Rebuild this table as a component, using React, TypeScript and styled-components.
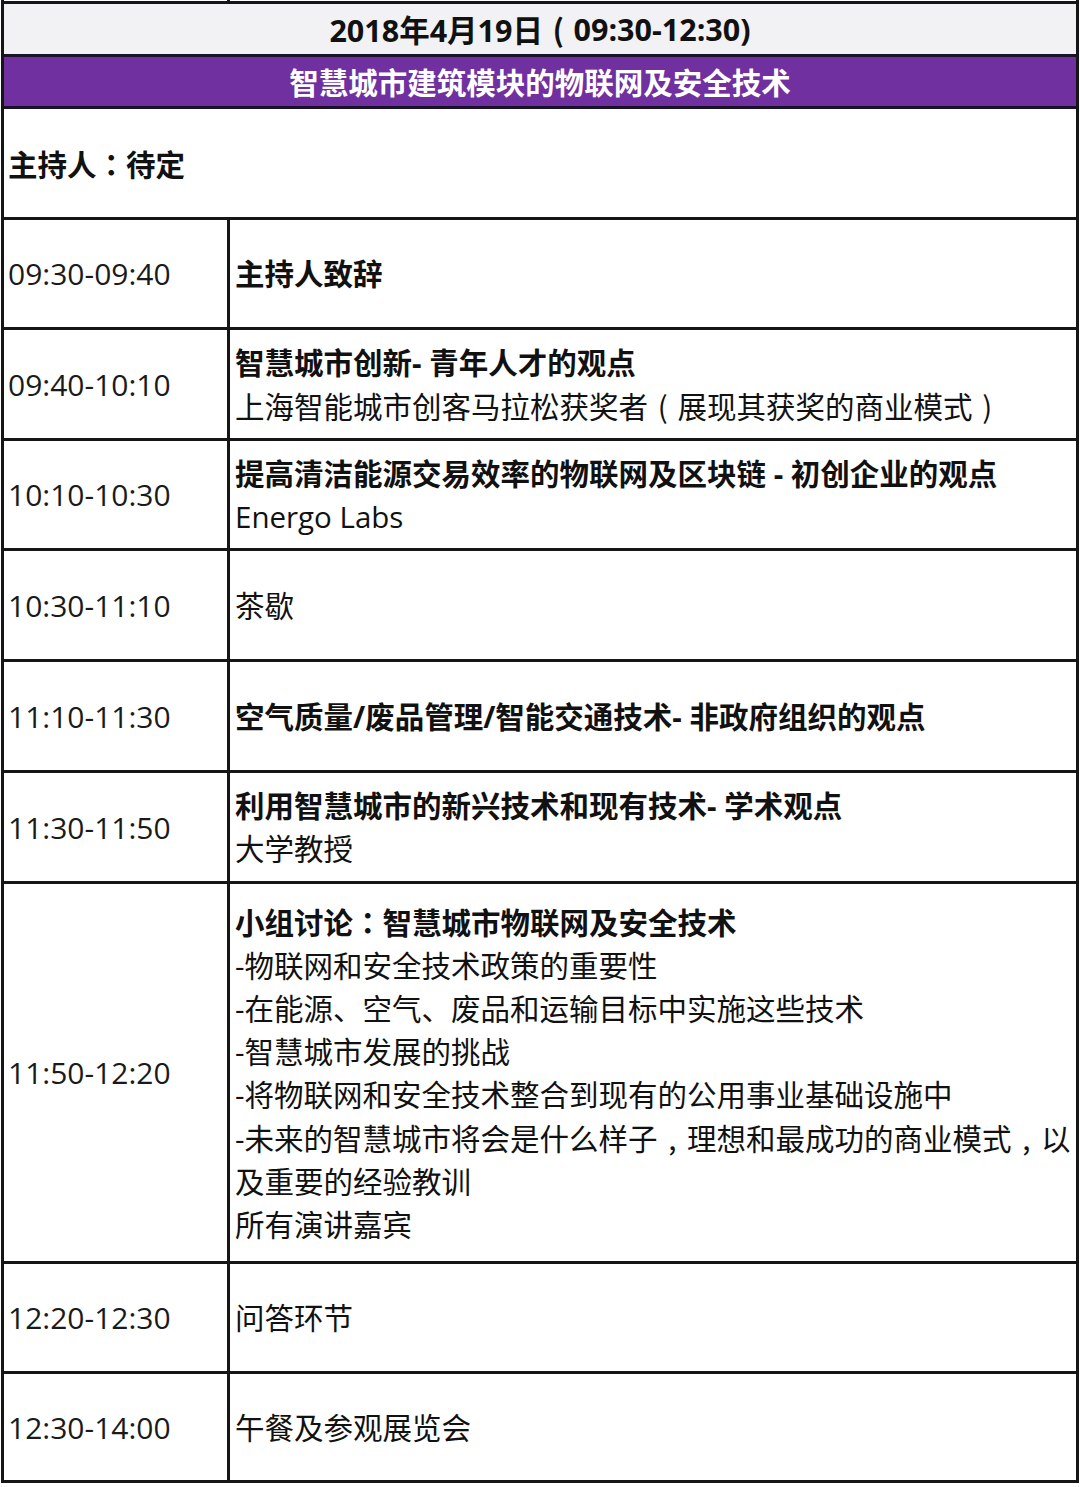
import React from 'react';
import styled, { createGlobalStyle } from 'styled-components';

const GlobalStyle = createGlobalStyle`
  html,
  body {
    margin: 0;
    padding: 0;
    background: #ffffff;
  }

  body {
    font-family: 'Open Sans', 'Noto Sans CJK SC', sans-serif;
    color: #111111;
  }
`;

const LINE = '3px solid #161616';

const Sheet = styled.div`
  width: 1078px;
  margin-left: 1px;
  box-sizing: border-box;
  border-left: ${LINE};
  border-right: ${LINE};
`;

const Stub = styled.div`
  display: grid;
  grid-template-columns: 223px 1fr;
  height: 1px;
  border-bottom: ${LINE};

  & > div + div {
    border-left: ${LINE};
  }
`;

interface BannerProps {
  $variant: 'date' | 'title';
}

const Banner = styled.div<BannerProps>`
  display: flex;
  align-items: center;
  justify-content: center;
  height: ${(p) => (p.$variant === 'date' ? '50px' : '49px')};
  background-color: ${(p) => (p.$variant === 'date' ? '#f2f2f4' : '#7030a0')};
  color: ${(p) => (p.$variant === 'date' ? '#111111' : '#ffffff')};
  border-bottom: 3px solid #1a1228;
  font-size: ${(p) => (p.$variant === 'date' ? '30.5px' : '29.5px')};
  font-weight: 700;
  white-space: nowrap;
`;

const HostRow = styled.div`
  display: flex;
  align-items: center;
  height: 108px;
  padding-left: 4px;
  border-bottom: ${LINE};
  font-size: 29.5px;
  font-weight: 700;
`;

interface SessionRowProps {
  $h: number;
}

const SessionRow = styled.div<SessionRowProps>`
  display: grid;
  grid-template-columns: 223px 1fr;
  height: ${(p) => p.$h}px;
  border-bottom: ${LINE};
`;

const TimeCell = styled.div`
  display: flex;
  align-items: center;
  padding-left: 4px;
  font-size: 30px;
  color: #1a1a1a;
`;

const ContentCell = styled.div`
  display: flex;
  flex-direction: column;
  justify-content: center;
  padding-left: 5px;
  border-left: ${LINE};
  font-size: 29.5px;
  line-height: 43px;
  white-space: nowrap;
  overflow: hidden;
`;

interface LineProps {
  $bold?: boolean;
}

const Line = styled.div<LineProps>`
  font-weight: ${(p) => (p.$bold ? 700 : 400)};
`;

// full-width colon sits centred in the em box, as in the original
const Colon = styled.span`
  font-family: 'Noto Sans CJK TC', 'Noto Sans CJK SC', sans-serif;
`;

// full-width bracket / comma: a narrow glyph centred in a one-em slot
const Slot = styled.span`
  display: inline-block;
  width: 1em;
  text-align: center;
  font-family: 'Noto Sans CJK SC', sans-serif;
`;

const withPunct = (text: string) =>
  text.split(/([：（），])/).map((part, i) => {
    if (part === '：') return <Colon key={i}>{part}</Colon>;
    if (part === '（') return <Slot key={i}>(</Slot>;
    if (part === '）') return <Slot key={i}>)</Slot>;
    if (part === '，') return <Slot key={i}>,</Slot>;
    return part;
  });

type Session = {
  time: string;
  h: number;
  lines: { text: string; bold?: boolean }[];
};

const sessions: Session[] = [
  { time: '09:30-09:40', h: 107, lines: [{ text: '主持人致辞', bold: true }] },
  {
    time: '09:40-10:10',
    h: 108,
    lines: [
      { text: '智慧城市创新- 青年人才的观点', bold: true },
      { text: '上海智能城市创客马拉松获奖者（展现其获奖的商业模式）' },
    ],
  },
  {
    time: '10:10-10:30',
    h: 107,
    lines: [
      { text: '提高清洁能源交易效率的物联网及区块链 - 初创企业的观点', bold: true },
      { text: 'Energo Labs' },
    ],
  },
  { time: '10:30-11:10', h: 108, lines: [{ text: '茶歇' }] },
  {
    time: '11:10-11:30',
    h: 108,
    lines: [{ text: '空气质量/废品管理/智能交通技术- 非政府组织的观点', bold: true }],
  },
  {
    time: '11:30-11:50',
    h: 108,
    lines: [
      { text: '利用智慧城市的新兴技术和现有技术- 学术观点', bold: true },
      { text: '大学教授' },
    ],
  },
  {
    time: '11:50-12:20',
    h: 377,
    lines: [
      { text: '小组讨论：智慧城市物联网及安全技术', bold: true },
      { text: '-物联网和安全技术政策的重要性' },
      { text: '-在能源、空气、废品和运输目标中实施这些技术' },
      { text: '-智慧城市发展的挑战' },
      { text: '-将物联网和安全技术整合到现有的公用事业基础设施中' },
      { text: '-未来的智慧城市将会是什么样子，理想和最成功的商业模式，以' },
      { text: '及重要的经验教训' },
      { text: '所有演讲嘉宾' },
    ],
  },
  { time: '12:20-12:30', h: 107, lines: [{ text: '问答环节' }] },
  { time: '12:30-14:00', h: 106, lines: [{ text: '午餐及参观展览会' }] },
];

const App = () => {
  return (
    <>
      <GlobalStyle />
      <Sheet>
        <Stub>
          <div />
          <div />
        </Stub>
        <Banner $variant="date">
          2018年4月19日<Slot>(</Slot>09:30-12:30)
        </Banner>
        <Banner $variant="title">智慧城市建筑模块的物联网及安全技术</Banner>
        <HostRow>{withPunct('主持人：待定')}</HostRow>
        {sessions.map((s) => (
          <SessionRow key={s.time} $h={s.h}>
            <TimeCell>{s.time}</TimeCell>
            <ContentCell>
              {s.lines.map((l, i) => (
                <Line key={i} $bold={l.bold}>
                  {withPunct(l.text)}
                </Line>
              ))}
            </ContentCell>
          </SessionRow>
        ))}
      </Sheet>
    </>
  );
};

export default App;
